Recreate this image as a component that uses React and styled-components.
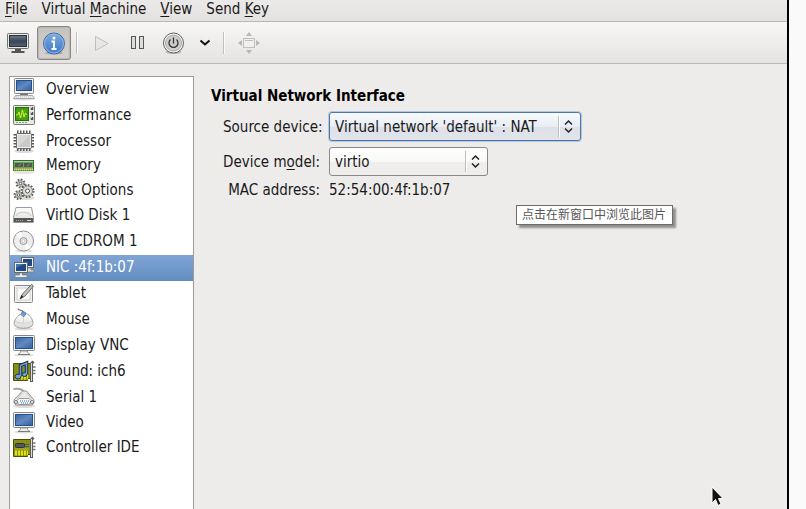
import React, { useState } from 'react';
import styled, { createGlobalStyle, css } from 'styled-components';

const GlobalStyle = createGlobalStyle`
  * {
    box-sizing: border-box;
  }

  body {
    margin: 0;
    background: #fafafa;
    font-family: 'DejaVu Sans Condensed', 'DejaVu Sans', sans-serif;
    font-size: 15px;
    line-height: 16px;
    color: #1a1a1a;
  }

  button, select {
    font: inherit;
    color: inherit;
  }
`;

const Window = styled.div`
  position: relative;
  display: flex;
  flex-direction: column;
  height: 100vh;
  margin-right: 17px;
  border-right: 2px solid #000;
  background: #edeceb;
  overflow: hidden;
`;

const MenuBar = styled.nav`
  display: flex;
  flex-shrink: 0;
  gap: 14px;
  height: 22px;
  padding: 1px 5px 4px;
  background: linear-gradient(#ebeae9, #e3e2e0);
  border-bottom: 1px solid #bab8b5;
`;

const MenuItem = styled.button`
  padding: 0;
  border: none;
  background: none;

  u {
    text-underline-offset: 2px;
    text-decoration-thickness: 1px;
    text-decoration-skip-ink: none;
  }
`;

const Toolbar = styled.div`
  display: flex;
  flex-shrink: 0;
  align-items: center;
  gap: 1px;
  height: 42px;
  background: linear-gradient(#f7f7f6, #e4e3e1);
  border-bottom: 1px solid #bab8b5;
`;

const ToolButton = styled.button`
  display: flex;
  align-items: center;
  justify-content: center;
  width: ${props => props.$width || 36}px;
  height: 34px;
  padding: 0;
  border: 1px solid transparent;
  border-radius: 3px;
  background: none;

  ${props => props.$active && css`
    border-color: #8a8782;
    background: linear-gradient(#c6c2be, #d5d1cd);
    box-shadow: inset 0 0 1px 1px #bbb7b3;
  `}
`;

const Separator = styled.div`
  width: 2px;
  height: 22px;
  margin: 0 4px;
  background: #c2c0bd;
  border-right: 1px solid #fbfbfb;
`;

const Body = styled.div`
  display: flex;
  flex: 1;
  gap: 17px;
  min-height: 0;
  padding: 12px 9px 0;
`;

const DeviceList = styled.div`
  flex: 0 0 185px;
  border: 1px solid #9f9c98;
  border-bottom: none;
  background: #fff;
`;

const DeviceRow = styled.button`
  display: flex;
  align-items: center;
  gap: 10px;
  width: 100%;
  height: ${props => props.$height || 26}px;
  padding: 0 2px 2px;
  border: none;
  text-align: left;
  background: ${props => props.$selected ? 'linear-gradient(#80a5d6, #628cbf)' : 'none'};
  color: ${props => props.$selected ? '#fff' : 'inherit'};

  svg {
    flex-shrink: 0;
  }
`;

const Details = styled.main`
  flex: 1;
  padding-top: 12px;
`;

const Heading = styled.h1`
  margin: 0 0 8px;
  font-size: 15px;
  line-height: 16px;
  color: #000;
`;

const Form = styled.div`
  display: grid;
  grid-template-columns: 97px auto;
  justify-content: start;
  align-items: center;
  gap: 6px 9px;
  padding-left: 12px;
`;

const Label = styled.label`
  text-align: right;
  white-space: nowrap;

  u {
    text-underline-offset: 2px;
  }
`;

const Value = styled.output`
  display: block;
`;

const SelectBox = styled.div`
  position: relative;
  width: ${props => props.$width}px;

  svg {
    position: absolute;
    top: 4px;
    right: 6px;
    pointer-events: none;
  }
`;

const Select = styled.select`
  display: block;
  width: 100%;
  height: 29px;
  padding: 0 28px 0 5px;
  border: 1px solid ${props => props.$focused ? '#4f76ab' : '#8c8984'};
  border-radius: 3px;
  appearance: none;
  outline: none;
  background: ${props => props.$focused
    ? 'linear-gradient(#f7fafe, #e9edf3 50%, #dde1e8 51%, #e1e5ea)'
    : 'linear-gradient(#fff, #f8f8f7 50%, #efeeed 51%, #efeeed)'};
  box-shadow: ${props => props.$focused ? '0 0 0 1px #b4c8e2' : 'none'};
`;

const Tooltip = styled.div`
  position: absolute;
  left: 516px;
  top: 205px;
  padding: 0 6px 2px 5px;
  border: 1px solid #6b6b6b;
  background: #fff;
  box-shadow: 3px 3px 2px #8f8f8f;
  color: #575757;
  font-family: 'Noto Sans CJK SC', sans-serif;
  font-size: 12px;
  line-height: 16px;
  white-space: nowrap;
`;

const Cursor = styled.svg`
  position: absolute;
  left: 711px;
  top: 486px;
  pointer-events: none;
`;

const Icon = ({ children, size = 24 }) => (
  <svg width={size} height={size} viewBox={`0 0 ${size} ${size}`} fill="none" aria-hidden="true">
    {children}
  </svg>
);

const GradientDefs = styled.svg`
  position: absolute;
`;

const Gradients = () => (
  <GradientDefs width="0" height="0" aria-hidden="true">
    <defs>
      <linearGradient id="screen" x1="0" y1="0" x2="1" y2="1">
        <stop offset="0" stopColor="#3465a4" />
        <stop offset="0.5" stopColor="#6289c0" />
        <stop offset="1" stopColor="#335f9f" />
      </linearGradient>
      <linearGradient id="darkScreen" x1="0" y1="0" x2="0" y2="1">
        <stop offset="0" stopColor="#6d7b8c" />
        <stop offset="0.5" stopColor="#3a4657" />
        <stop offset="1" stopColor="#536073" />
      </linearGradient>
      <linearGradient id="metal" x1="0" y1="0" x2="1" y2="1">
        <stop offset="0" stopColor="#fff" />
        <stop offset="1" stopColor="#b9bab7" />
      </linearGradient>
      <linearGradient id="body" x1="0" y1="0" x2="0" y2="1">
        <stop offset="0" stopColor="#fff" />
        <stop offset="1" stopColor="#d9dad7" />
      </linearGradient>
      <linearGradient id="info" x1="0" y1="0" x2="0" y2="1">
        <stop offset="0" stopColor="#7ba8de" />
        <stop offset="1" stopColor="#3e7ac5" />
      </linearGradient>
    </defs>
  </GradientDefs>
);

const LaptopIcon = () => (
  <Icon>
    <ellipse cx="12" cy="22" rx="11" ry="1.5" fill="#ddd" />
    <rect x="2.5" y="1.5" width="19" height="15" rx="1" fill="#f2f2f0" stroke="#858783" />
    <rect x="4.5" y="3.5" width="15" height="10" fill="url(#screen)" stroke="#24508c" />
    <path d="M8 16.5h8v2H8z" fill="#777" />
    <path d="M3.5 18.5h17l2 3h-21z" fill="#eeeeec" stroke="#a9aaa6" />
    <path d="M4 20h16" stroke="#bbb" strokeDasharray="1 1" />
  </Icon>
);

const ScopeIcon = () => (
  <Icon>
    <rect x="1.5" y="2.5" width="21" height="19" rx="1" fill="#e7e7e4" stroke="#777973" />
    <rect x="3.5" y="4.5" width="13" height="13" fill="#3d9b09" stroke="#286d05" />
    <path d="M4 8h12M4 11h12M4 14h12M7 5v12M10 5v12M13 5v12" stroke="#67bb2f" strokeWidth="0.5" />
    <path d="M4 12h1.5l1.5-3 1.5 6 2-8 1.5 7 1.5-4 1.5 2" stroke="#d9ef35" />
    <path d="M20 4v13" stroke="#555" strokeWidth="2.5" strokeDasharray="3 2" />
    <path d="M19.5 4v13" stroke="#ccc" strokeDasharray="1 4" />
    <path d="M4 19.5h12" stroke="#999" strokeDasharray="2 1" />
  </Icon>
);

const ChipIcon = () => (
  <Icon>
    <ellipse cx="12" cy="22" rx="10" ry="2" fill="#ddd" />
    <path d="M5 3.500h15M5 20h15" stroke="#555" strokeWidth="4" strokeDasharray="1.500 1.500" />
    <path d="M3.500 5v15M20 5v15" stroke="#555" strokeWidth="4" strokeDasharray="1.500 1.500" />
    <rect x="4.500" y="4.500" width="15" height="15" rx="1" fill="#ededeb" stroke="#6b6d69" />
    <rect x="6" y="6" width="12" height="12" fill="#c9c9c7" />
    <path d="M6 18V6h12z" fill="#dedede" opacity="0.7" />
  </Icon>
);

const RamIcon = () => (
  <Icon>
    <ellipse cx="12" cy="19" rx="11" ry="2" fill="#e4e4e4" />
    <rect x="1.500" y="7.500" width="20" height="10" fill="#65a657" stroke="#39712e" />
    <path d="M2 8.500h19" stroke="#a3d198" />
    <path d="M3 10h8v4H3zM12 10h8v4h-8z" fill="#555" />
    <path d="m6 13 3-2M15 13l3-2" stroke="#888" />
    <path d="M2 16.500h19" stroke="#dfd562" strokeWidth="2" strokeDasharray="1.500 0.500" />
  </Icon>
);

const Gear = ({ x, y, r }) => (
  <g>
    <circle cx={x} cy={y} r={r} stroke="#5c5e5b" strokeWidth="2" strokeDasharray="1.7 1.4" />
    <circle cx={x} cy={y} r={r - 1} fill="#deded9" stroke="#83857f" />
    <circle cx={x} cy={y} r={r / 3} fill="#fff" stroke="#555753" />
  </g>
);

const GearsIcon = () => (
  <Icon>
    <ellipse cx="14" cy="20" rx="9" ry="2" fill="#ddd" />
    <Gear x={8.5} y={5.5} r={4} />
    <Gear x={15.5} y={13} r={6} />
    <Gear x={6.5} y={17} r={4} />
  </Icon>
);

const DiskIcon = () => (
  <Icon>
    <path d="M4 4.500h15.500l2 10v5h-20v-5z" fill="url(#body)" stroke="#9b9d98" />
    <path d="M4 13c2-5 13-5 15 0" stroke="#c9cac7" />
    <path d="M2 15h19v4H2z" fill="#555753" />
    <path d="M2 14.500h19" stroke="#ededeb" />
    <path d="M4 17.500h7" stroke="#aaa" strokeDasharray="1 1" />
    <path d="M15 17.500h4" stroke="#ddd" />
  </Icon>
);

const DiscIcon = () => (
  <Icon>
    <ellipse cx="12" cy="22" rx="9" ry="1.500" fill="#e2e2e2" />
    <circle cx="11.500" cy="12" r="10" fill="#eeeeed" stroke="#939490" />
    <path d="M11.500 12 4 6a10 10 0 0 1 5-3zM11.500 12l7.500 6a10 10 0 0 1-5 3z" fill="#fff" />
    <circle cx="11.500" cy="12" r="3.500" fill="#e4e4e4" stroke="#999" />
    <circle cx="11.500" cy="12" r="1.500" fill="#fff" stroke="#ccc" />
  </Icon>
);

const NetworkIcon = () => (
  <Icon>
    <rect x="9.500" y="2.500" width="12" height="10" fill="#eeeeec" stroke="#686a66" />
    <rect x="11" y="4" width="9" height="7" fill="#204a87" />
    <path d="M14 13h5v2h3v2h-8z" fill="#deded9" stroke="#777" strokeWidth="0.700" />
    <rect x="2.500" y="7.500" width="13" height="10" fill="#eeeeec" stroke="#686a66" />
    <rect x="4" y="9" width="10" height="7" fill="#204a87" />
    <path d="M4 13V9h8z" fill="#4773b0" />
    <path d="M7.500 18h3v2H15v2.500H3V20h4.500z" fill="#eeeeec" stroke="#777" strokeWidth="0.700" />
  </Icon>
);

const TabletIcon = () => (
  <Icon>
    <rect x="2.500" y="4.500" width="18" height="17" rx="1" fill="#f3f3f1" stroke="#888a85" />
    <rect x="5" y="7" width="13" height="12" fill="#fdfdfd" stroke="#cfd0cd" />
    <path d="m8 18 2.500-5 9-9.500 2 1.500-8.500 10z" fill="#c1c3bf" stroke="#6c6e6b" />
    <path d="m8 18 1.500-4 2 2z" fill="#222" />
  </Icon>
);

const MouseIcon = () => (
  <Icon>
    <ellipse cx="12" cy="22" rx="10" ry="1.500" fill="#ddd" />
    <path d="M6 1.500c0 3 5 0 5.500 4.500" stroke="#777" strokeWidth="1.300" />
    <path d="M7 8c3-2 7-2 10 0 2 2 4 5 4 8.500 0 6.500-19 6.500-19 0C2 13 5 10 7 8z" fill="url(#body)" stroke="#a2a49f" />
    <path d="M3 14c4 3 14 3 17 0M11.500 10v6" stroke="#d3d4d1" />
    <path d="M10 5h3l1 2-2.500 3L9 7.500z" fill="#729fcf" stroke="#4777ae" strokeWidth="0.700" />
  </Icon>
);

const DisplayIcon = () => (
  <Icon>
    <ellipse cx="12" cy="22" rx="10" ry="1.500" fill="#ddd" />
    <rect x="1.500" y="2.500" width="21" height="15" rx="1" fill="#f2f2f0" stroke="#858783" />
    <rect x="3.500" y="4.500" width="17" height="11" fill="url(#screen)" stroke="#24508c" />
    <path d="M8.500 18h7v1.500l2.500 2H6l2.500-2z" fill="#eeeeec" stroke="#8b8d88" strokeWidth="0.800" />
    <path d="M6 21.500h12" stroke="#777973" />
  </Icon>
);

const Card = () => (
  <>
    <path d="M1.500 4.500h17v15h-3v2h-14z" fill="#8a9112" stroke="#4b4f0b" />
    <path d="M3 18h13" stroke="#dfe312" strokeWidth="5" strokeDasharray="2 1" />
    <path d="M19.500 23V4.500l2-2" stroke="#5b5d59" strokeWidth="3" />
    <path d="M19.500 22V4" stroke="#dedfdb" />
    <path d="M21 8h2.500M21 11.500h2.500M21 14.500h2.500" stroke="#777" strokeWidth="1.500" />
  </>
);

const SoundIcon = () => (
  <Icon>
    <Card />
    <path d="M8.500 17V6.500L14.500 4v11" stroke="#122f58" strokeWidth="3.500" />
    <ellipse cx="6" cy="17.500" rx="3" ry="2.500" fill="#729fcf" stroke="#122f58" />
    <ellipse cx="12.500" cy="15.500" rx="2.500" ry="2" fill="#729fcf" stroke="#122f58" />
    <path d="M8.500 17V6.500L14.500 4v11" stroke="#729fcf" strokeWidth="1.500" />
  </Icon>
);

const SerialIcon = () => (
  <Icon>
    <ellipse cx="12" cy="21" rx="11" ry="2" fill="#ddd" />
    <path d="M1.500 4c6-1 9 0 10.500 3" stroke="#a2a49f" strokeWidth="2" />
    <path d="M10.500 6h4l7.500 9v3l-2 2H4l-2-2v-3z" fill="#e9e9e7" stroke="#92948f" />
    <path d="M10 8 5 14M14.500 8l5 6" stroke="#c9cac7" />
    <path d="M7 13.500h10l2 2-1.500 4h-11L5 15.500z" fill="#fafafa" stroke="#999" />
    <path d="M8 16h9M9 18h7" stroke="#6b98cd" strokeWidth="1.500" strokeDasharray="1 1" />
    <circle cx="4" cy="17" r="1.500" fill="#fff" stroke="#777" />
    <circle cx="20" cy="17" r="1.500" fill="#fff" stroke="#777" />
  </Icon>
);

const ControllerIcon = () => (
  <Icon>
    <Card />
    <path d="M3 14h14" stroke="#afb631" />
    <rect x="3.500" y="8.500" width="9" height="4" rx="1" fill="#555753" stroke="#2e3436" />
    <path d="M13 9.500h4M13 11.500h4" stroke="#355c91" />
  </Icon>
);

const ConsoleIcon = () => (
  <Icon>
    <rect x="1.500" y="2.500" width="21" height="15" rx="1" fill="#e7e7e5" stroke="#70726e" />
    <rect x="3.500" y="4.500" width="17" height="11" fill="url(#darkScreen)" stroke="#2e3436" />
    <path d="M9 18h6v2H9z" fill="#555753" />
    <path d="M5.500 21h13" stroke="#555753" strokeWidth="2" />
  </Icon>
);

const InfoIcon = () => (
  <Icon>
    <ellipse cx="12" cy="22" rx="9" ry="1.500" fill="#a5a19d" />
    <circle cx="12" cy="12.500" r="10.500" fill="url(#info)" stroke="#3668a8" />
    <circle cx="12" cy="12.500" r="9.500" stroke="#91b7e4" />
    <circle cx="12" cy="7" r="1.600" fill="#fff" />
    <path d="M9.500 10.500H12v7M9.500 18h5" stroke="#fff" strokeWidth="1.800" />
  </Icon>
);

const PlayIcon = () => (
  <Icon>
    <path d="M6.500 5.500v14l12.500-7z" fill="#e7e7e5" stroke="#c0bfbc" />
  </Icon>
);

const PauseIcon = () => (
  <Icon>
    <rect x="5.500" y="5.500" width="4" height="12" fill="#dededc" stroke="#555753" />
    <rect x="13.500" y="5.500" width="4" height="12" fill="#dededc" stroke="#555753" />
  </Icon>
);

const PowerIcon = () => (
  <Icon>
    <ellipse cx="11.500" cy="21" rx="8" ry="2" fill="#bbb" />
    <circle cx="11.500" cy="12" r="10" fill="#fafafa" stroke="#60625e" />
    <circle cx="11.500" cy="12" r="8" fill="#cdcdcb" stroke="#aaa" />
    <path d="M8.500 8.500a4.500 4.500 0 1 0 6 0M11.500 6.500v6" stroke="#2e3436" strokeWidth="1.300" />
  </Icon>
);

const ChevronIcon = () => (
  <Icon size={12}>
    <path d="m1.500 3.500 4.500 4 4.500-4" stroke="#111" strokeWidth="2" />
  </Icon>
);

const FullscreenIcon = () => (
  <Icon>
    <rect x="7.500" y="7.500" width="11" height="9" fill="#f0f0ee" stroke="#c0bfbc" />
    <path d="M9 9.500h8" stroke="#c0bfbc" />
    <path d="m13 1 3 4h-6zM13 23l3-4h-6zM2 12l4-3v6zM24 12l-4-3v6z" fill="#b9b8b5" />
  </Icon>
);

const SelectArrows = () => (
  <svg width="18" height="21" viewBox="0 0 18 21" fill="none" aria-hidden="true">
    <path d="M1.500 0v21" stroke="#bfbdba" />
    <path d="M2.500 0v21" stroke="#fff" />
    <path d="m8 8.500 3.500-3.500 3.500 3.500M8 12.500l3.500 3.500 3.500-3.500" stroke="#222" strokeWidth="1.500" />
  </svg>
);

const devices = [
  { name: 'Overview', icon: LaptopIcon },
  { name: 'Performance', icon: ScopeIcon },
  { name: 'Processor', icon: ChipIcon, height: 25 },
  { name: 'Memory', icon: RamIcon, height: 24 },
  { name: 'Boot Options', icon: GearsIcon, height: 25 },
  { name: 'VirtIO Disk 1', icon: DiskIcon },
  { name: 'IDE CDROM 1', icon: DiscIcon },
  { name: 'NIC :4f:1b:07', icon: NetworkIcon },
  { name: 'Tablet', icon: TabletIcon },
  { name: 'Mouse', icon: MouseIcon },
  { name: 'Display VNC', icon: DisplayIcon },
  { name: 'Sound: ich6', icon: SoundIcon },
  { name: 'Serial 1', icon: SerialIcon, height: 25 },
  { name: 'Video', icon: DisplayIcon, height: 25 },
  { name: 'Controller IDE', icon: ControllerIcon, height: 25 },
];

const App = () => {
  const [selected, setSelected] = useState('NIC :4f:1b:07');

  return (
    <>
      <GlobalStyle />
      <Gradients />
      <Window>
        <MenuBar>
          <MenuItem><u>F</u>ile</MenuItem>
          <MenuItem>Virtual <u>M</u>achine</MenuItem>
          <MenuItem><u>V</u>iew</MenuItem>
          <MenuItem>Send <u>K</u>ey</MenuItem>
        </MenuBar>

        <Toolbar>
          <ToolButton aria-label="Console"><ConsoleIcon /></ToolButton>
          <ToolButton aria-label="Details" $width={34} $active><InfoIcon /></ToolButton>
          <Separator />
          <ToolButton aria-label="Run" disabled><PlayIcon /></ToolButton>
          <ToolButton aria-label="Pause"><PauseIcon /></ToolButton>
          <ToolButton aria-label="Shut down" $width={34}><PowerIcon /></ToolButton>
          <ToolButton aria-label="Shut down options" $width={26}><ChevronIcon /></ToolButton>
          <Separator />
          <ToolButton aria-label="Fullscreen" disabled><FullscreenIcon /></ToolButton>
        </Toolbar>

        <Body>
          <DeviceList>
            {devices.map(({ name, icon: DeviceIcon, height }) => (
              <DeviceRow
                key={name}
                $height={height}
                $selected={name === selected}
                onClick={() => setSelected(name)}
              >
                <DeviceIcon />
                <span>{name}</span>
              </DeviceRow>
            ))}
          </DeviceList>

          <Details>
            <Heading>Virtual Network Interface</Heading>
            <Form>
              <Label htmlFor="source">Source device:</Label>
              <SelectBox $width={252}>
                <Select id="source" $focused>
                  <option>Virtual network 'default' : NAT</option>
                </Select>
                <SelectArrows />
              </SelectBox>

              <Label htmlFor="model">Device m<u>o</u>del:</Label>
              <SelectBox $width={159}>
                <Select id="model">
                  <option>virtio</option>
                </Select>
                <SelectArrows />
              </SelectBox>

              <Label htmlFor="mac">MAC address:</Label>
              <Value id="mac">52:54:00:4f:1b:07</Value>
            </Form>
          </Details>
        </Body>

        <Tooltip role="tooltip">点击在新窗口中浏览此图片</Tooltip>
        <Cursor width="13" height="21" viewBox="0 0 13 21" aria-hidden="true">
          <path d="M1 1v16l3.500-3.500 2.500 6 3-1.500-2.500-5.500H12z" fill="#111" stroke="#fff" />
        </Cursor>
      </Window>
    </>
  );
};

export default App;
